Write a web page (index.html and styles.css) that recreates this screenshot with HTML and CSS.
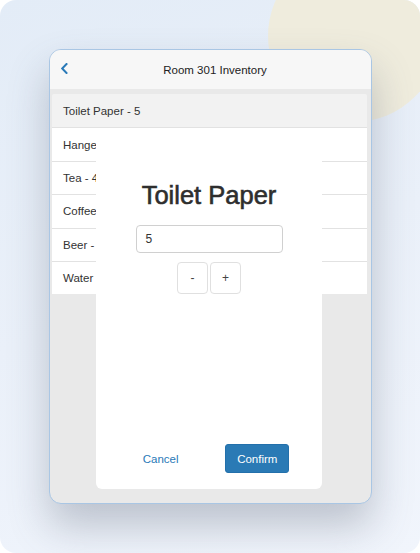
FILE: index.html
```html
<!DOCTYPE html>
<html>
<head>
<meta charset="utf-8">
<link rel="stylesheet" href="styles.css">
</head>
<body>
<div class="page">
  <div class="blob"></div>
  <div class="device">
    <header class="bar">
      <span class="back">
        <svg width="9" height="11" viewBox="0 0 9 11"><path d="M6.5 1 L2.2 5.5 L6.5 10" fill="none" stroke="#2a7ab8" stroke-width="2" stroke-linecap="square"/></svg>
      </span>
      <span class="bar-title">Room 301 Inventory</span>
    </header>
    <div class="content">
      <ul class="list">
        <li class="row active">Toilet Paper - 5</li>
        <li class="row">Hangers - 10</li>
        <li class="row">Tea - 4</li>
        <li class="row">Coffee - 6</li>
        <li class="row">Beer - 2</li>
        <li class="row">Water - 8</li>
      </ul>
    </div>
    <div class="modal">
      <h1 class="modal-title">Toilet Paper</h1>
      <div class="field">5</div>
      <div class="stepper">
        <button class="step">-</button>
        <button class="step">+</button>
      </div>
      <div class="actions">
        <button class="btn-link">Cancel</button>
        <button class="btn-primary">Confirm</button>
      </div>
    </div>
  </div>
</div>
</body>
</html>
```

FILE: styles.css
```css
html, body {
  margin: 0;
  padding: 0;
  background: #ffffff;
}
body {
  width: 420px;
  height: 553px;
  font-family: "Liberation Sans", Arial, sans-serif;
  overflow: hidden;
}
.page {
  position: relative;
  width: 420px;
  height: 553px;
  box-sizing: border-box;
  padding: 49px 0 0 49px;
  border-radius: 16px;
  overflow: hidden;
  background: linear-gradient(160deg, #e3ecf7 0%, #eaf0f9 50%, #f1f5fc 100%);
}
.blob {
  position: absolute;
  left: 268px;
  top: -50px;
  width: 172px;
  height: 172px;
  border-radius: 50%;
  background: #efecdd;
}
.device {
  position: relative;
  width: 323px;
  height: 455px;
  box-sizing: border-box;
  border: 1px solid #a9c6e4;
  border-radius: 12px;
  overflow: hidden;
  background: #e9e9e9;
  display: flex;
  flex-direction: column;
  box-shadow: 0 22px 40px rgba(80, 90, 110, 0.32);
}
.bar {
  height: 39px;
  flex: none;
  background: #f7f7f7;
  display: flex;
  align-items: center;
  justify-content: center;
  position: relative;
  padding-left: 9px;
}
.back {
  position: absolute;
  left: 10px;
  top: 13px;
  display: flex;
}
.bar-title {
  font-size: 11.5px;
  color: #222;
}
.content {
  flex: 1;
  padding: 5px 4px 0 2px;
}
.list {
  list-style: none;
  margin: 0;
  padding: 0;
}
.row {
  height: 33.4px;
  box-sizing: border-box;
  padding-left: 11px;
  display: flex;
  align-items: center;
  font-size: 11.5px;
  color: #333;
  background: #fff;
  border-top: 1px solid #e2e2e2;
}
.row.active {
  background: #f2f2f2;
  border-top: none;
  border-radius: 2px 2px 0 0;
}
.modal {
  position: absolute;
  left: 46px;
  top: 78px;
  width: 226px;
  height: 361px;
  background: #fff;
  border-radius: 6px;
  display: flex;
  flex-direction: column;
  align-items: center;
}
.modal-title {
  margin: 52px 0 0;
  height: 30px;
  line-height: 30px;
  font-size: 25.5px;
  font-weight: normal;
  color: #2e2e2e;
  -webkit-text-stroke: 0.6px #2e2e2e;
}
.field {
  margin-top: 15px;
  width: 147px;
  height: 28px;
  box-sizing: border-box;
  border: 1px solid #d0d0d0;
  border-radius: 4px;
  padding-left: 9px;
  display: flex;
  align-items: center;
  font-size: 12px;
  color: #333;
}
.stepper {
  margin-top: 9px;
  display: flex;
  gap: 2px;
}
.step {
  width: 31px;
  height: 32px;
  box-sizing: border-box;
  border: 1px solid #e0e0e0;
  border-radius: 4px;
  background: #fff;
  font-family: "Liberation Sans", Arial, sans-serif;
  font-size: 12px;
  color: #444;
  padding: 0;
}
.actions {
  margin-top: auto;
  margin-bottom: 16px;
  width: 100%;
  display: flex;
  justify-content: space-evenly;
  align-items: center;
}
.btn-link, .btn-primary {
  width: 64px;
  height: 29px;
  box-sizing: border-box;
  border-radius: 3px;
  font-family: "Liberation Sans", Arial, sans-serif;
  font-size: 11.5px;
  padding: 0;
}
.btn-link {
  border: none;
  background: transparent;
  color: #2a7ab8;
}
.btn-primary {
  border: 1px solid #2370ab;
  background: #2a7ab5;
  color: #fff;
}
```
